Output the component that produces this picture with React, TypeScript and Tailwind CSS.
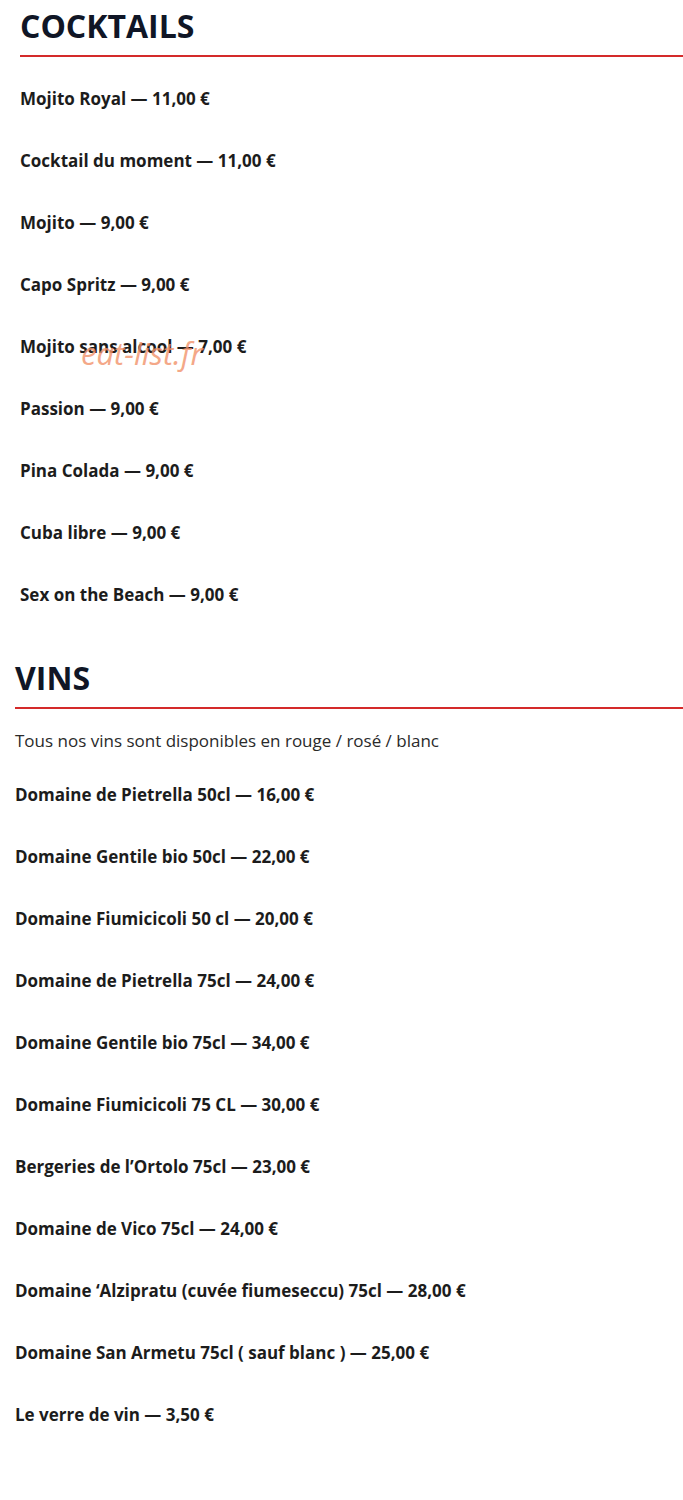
import React from 'react';

const cocktails = [
  'Mojito Royal — 11,00 €',
  'Cocktail du moment — 11,00 €',
  'Mojito — 9,00 €',
  'Capo Spritz — 9,00 €',
  'Mojito sans alcool — 7,00 €',
  'Passion — 9,00 €',
  'Pina Colada — 9,00 €',
  'Cuba libre — 9,00 €',
  'Sex on the Beach — 9,00 €',
];

const vins = [
  'Domaine de Pietrella 50cl — 16,00 €',
  'Domaine Gentile bio 50cl — 22,00 €',
  'Domaine Fiumicicoli 50 cl — 20,00 €',
  'Domaine de Pietrella 75cl — 24,00 €',
  'Domaine Gentile bio 75cl — 34,00 €',
  'Domaine Fiumicicoli 75 CL — 30,00 €',
  'Bergeries de l’Ortolo 75cl — 23,00 €',
  'Domaine de Vico 75cl — 24,00 €',
  'Domaine ‘Alzipratu (cuvée fiumeseccu) 75cl — 28,00 €',
  'Domaine San Armetu 75cl ( sauf blanc ) — 25,00 €',
  'Le verre de vin — 3,50 €',
];

function MenuItem({ label }: { label: string }) {
  return (
    <li className="h-[62px] flex items-center text-[17px] font-bold text-[#1c1c1c]">
      {label}
    </li>
  );
}

function SectionTitle({ title }: { title: string }) {
  return (
    <h2 className="pb-[9px] border-b-2 border-[#d42a2a] text-[32px] leading-[40px] font-bold text-[#101626]">
      {title}
    </h2>
  );
}

export default function App() {
  return (
    <div
      className="relative w-[683px] min-h-[1500px] bg-white"
      style={{ fontFamily: '"Open Sans", "Noto Sans", sans-serif' }}
    >
      {/* Cocktails */}
      <section className="pl-5 pt-[6px]">
        <SectionTitle title="COCKTAILS" />
        <ul className="mt-[11px]">
          {cocktails.map(c => (
            <MenuItem key={c} label={c} />
          ))}
        </ul>
      </section>

      {/* Vins */}
      <section className="pl-[15px] mt-[32px]">
        <SectionTitle title="VINS" />
        <p className="mt-5 text-[17px] leading-6 text-[#2a2a2a]">
          Tous nos vins sont disponibles en rouge / rosé / blanc
        </p>
        <ul className="mt-[11px]">
          {vins.map(v => (
            <MenuItem key={v} label={v} />
          ))}
        </ul>
      </section>

      {/* watermark */}
      <div className="absolute left-[81px] top-[335px] text-[31px] leading-[36px] italic text-[#f2936b] opacity-80 pointer-events-none">
        eat-list.fr
      </div>
    </div>
  );
}
